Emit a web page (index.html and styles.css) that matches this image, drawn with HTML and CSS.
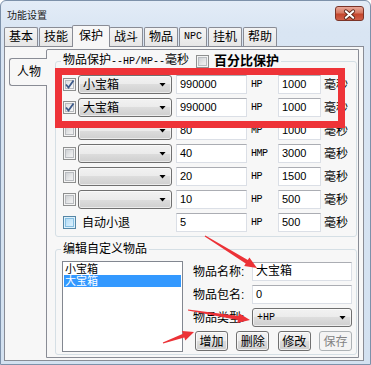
FILE: index.html
```html
<!DOCTYPE html>
<html>
<head>
<meta charset="utf-8">
<link rel="stylesheet" href="styles.css">
</head>
<body>
<div class="screen">
  <div class="window">
    <div class="titlebar">
      <span class="title">功能设置</span>
      <span class="close">
        <svg width="29" height="15" viewBox="0 0 29 15">
          <path d="M10.5 4 L18.5 11 M18.5 4 L10.5 11" stroke="#5b2418" stroke-width="4" stroke-linecap="round"/>
          <path d="M10.5 4 L18.5 11 M18.5 4 L10.5 11" stroke="#ffffff" stroke-width="2.2" stroke-linecap="round"/>
        </svg>
      </span>
    </div>
    <div class="client">
      <div class="tabs">
        <div class="tab">基本</div>
        <div class="tab">技能</div>
        <div class="tab active">保护</div>
        <div class="tab">战斗</div>
        <div class="tab">物品</div>
        <div class="tab"><span class="lat">NPC</span></div>
        <div class="tab">挂机</div>
        <div class="tab">帮助</div>
      </div>
      <div class="page">
        <div class="vtab">人物</div>
        <div class="inner">
          <div class="group g1">
            <div class="gtitle">
              <span>物品保护<span class="lat">--HP/MP--</span>毫秒</span>
              <span class="cb"></span>
              <b class="bold">百分比保护</b>
            </div>
            <div class="rows">
              <span class="cb checked"><svg width="11" height="11" viewBox="0 0 11 11"><path d="M2 5.5 L4.5 8.5 L9.5 1.5" fill="none" stroke="#3d5a8a" stroke-width="1.8"/></svg></span>
              <div class="combo"><span>小宝箱</span><i class="arrow"></i></div>
              <div class="edit">990000</div>
              <span class="unit">HP</span>
              <div class="edit">1000</div>
              <span class="ms">毫秒</span>

              <span class="cb checked"><svg width="11" height="11" viewBox="0 0 11 11"><path d="M2 5.5 L4.5 8.5 L9.5 1.5" fill="none" stroke="#3d5a8a" stroke-width="1.8"/></svg></span>
              <div class="combo"><span>大宝箱</span><i class="arrow"></i></div>
              <div class="edit">990000</div>
              <span class="unit">HP</span>
              <div class="edit">1000</div>
              <span class="ms">毫秒</span>

              <span class="cb"></span>
              <div class="combo"><span></span><i class="arrow"></i></div>
              <div class="edit">80</div>
              <span class="unit">MP</span>
              <div class="edit">1000</div>
              <span class="ms">毫秒</span>

              <span class="cb"></span>
              <div class="combo"><span></span><i class="arrow"></i></div>
              <div class="edit">40</div>
              <span class="unit">HMP</span>
              <div class="edit">3000</div>
              <span class="ms">毫秒</span>

              <span class="cb"></span>
              <div class="combo"><span></span><i class="arrow"></i></div>
              <div class="edit">20</div>
              <span class="unit">HP</span>
              <div class="edit">1500</div>
              <span class="ms">毫秒</span>

              <span class="cb"></span>
              <div class="combo"><span></span><i class="arrow"></i></div>
              <div class="edit">10</div>
              <span class="unit">HP</span>
              <div class="edit">500</div>
              <span class="ms">毫秒</span>

              <span class="cb hot"></span>
              <span class="cblabel">自动小退</span>
              <div class="edit">5</div>
              <span class="unit">HP</span>
              <div class="edit">500</div>
              <span class="ms">毫秒</span>
            </div>
          </div>
          <div class="group g2">
            <div class="gtitle"><span>编辑自定义物品</span></div>
            <div class="g2body">
              <div class="listbox">
                <div class="item">小宝箱</div>
                <div class="item sel">大宝箱</div>
              </div>
              <div class="form">
                <div class="field"><span class="flabel">物品名称:</span><div class="edit wide cjk">大宝箱</div></div>
                <div class="field"><span class="flabel">物品包名:</span><div class="edit wide">0</div></div>
                <div class="field"><span class="flabel">物品类型:</span><div class="combo wide"><span class="lat">+HP</span><i class="arrow"></i></div></div>
                <div class="buttons">
                  <button class="btn">增加</button>
                  <button class="btn">删除</button>
                  <button class="btn">修改</button>
                  <button class="btn" disabled>保存</button>
                </div>
              </div>
            </div>
          </div>
        </div>
      </div>
    </div>
  </div>
  <div class="redbox"></div>
  <svg class="arrows" width="371" height="365" viewBox="0 0 371 365">
    <polygon points="204.7,236.4 245.7,263.4 244.2,266.0 257,268 249.4,257.4 247.8,260.0 205.3,235.6"/>
    <polygon points="187.9,310.5 237.8,320.1 237.4,323.0 250,320 239.0,313.2 238.5,316.1 188.1,309.5"/>
    <polygon points="163.2,343.5 184.3,337.6 185.3,340.4 194,332 182.0,331.0 183.0,333.8 162.8,342.5"/>
  </svg>
</div>
</body>
</html>
```
FILE: styles.css
```css
* { box-sizing: border-box; }
html, body { margin: 0; padding: 0; }
body {
  width: 371px;
  height: 365px;
  overflow: hidden;
  background: #ffffff;
  font-family: "Liberation Sans", "Noto Sans CJK SC", sans-serif;
  font-size: 12px;
  line-height: 14px;
  color: #000;
}
.screen { position: relative; width: 371px; height: 365px; }
.window {
  width: 371px;
  height: 365px;
  border: 1px solid #7d91aa;
  border-radius: 6px 6px 0 0;
  background: linear-gradient(#e3ecf7, #d9e5f3 30px, #d3e1f0);
  padding: 0 6px 3px 3px;
  display: flex;
  flex-direction: column;
}
.titlebar {
  height: 24px;
  display: flex;
  justify-content: space-between;
  align-items: flex-start;
}
.title {
  margin: 7px 0 0 3px;
  font-family: "Noto Sans CJK SC", sans-serif;
  font-size: 10px;
  line-height: 14px;
  color: #1a1a1a;
}
.close {
  margin-top: 5px;
  width: 29px;
  height: 15px;
  border: 1px solid #7b3428;
  border-radius: 3px;
  background: linear-gradient(#e9a899, #d77a64 45%, #c4452c 55%, #d0604a);
  display: flex;
}
.client { flex: 1; display: flex; flex-direction: column; }
.tabs {
  height: 21px;
  display: flex;
  align-items: flex-end;
}
.tab {
  height: 19px;
  padding: 0 4px;
  margin-right: 1px;
  border: 1px solid #898c95;
  border-bottom: none;
  border-radius: 2px 2px 0 0;
  background: linear-gradient(#f4f4f4, #e6e6e6);
  display: flex;
  align-items: center;
  line-height: 14px;
}
.tab.active {
  position: relative;
  z-index: 2;
  height: 22px;
  margin: 0 -1px -1px -2px;
  padding: 0 6px 2px;
  background: #f7f7f7;
}
.lat {
  font-family: "Liberation Mono", monospace;
  font-size: 10px;
}
.page {
  flex: 1;
  border: 1px solid #898c95;
  background: #f7f7f7;
  padding: 2px 4px 2px 4px;
  display: flex;
  align-items: flex-start;
}
.vtab {
  position: relative;
  z-index: 1;
  width: 38px;
  height: 28px;
  margin: 9px -1px 0 0;
  padding-left: 7px;
  border: 1px solid #898c95;
  border-right: none;
  border-radius: 3px 0 0 3px;
  background: #f7f7f7;
  display: flex;
  align-items: center;
}
.inner {
  flex: 1;
  align-self: stretch;
  border: 1px solid #898c95;
  border-radius: 2px 0 0 0;
  background: #f7f7f7;
  padding: 0 1px 0 8px;
}
.group {
  border: 1px solid #d5dfe5;
  border-radius: 3px;
}
.g1 { margin-top: 11px; padding: 0 6px 4px 7px; }
.g2 { margin-top: 12px; padding: 0 3px 2px 6px; }
.gtitle {
  width: fit-content;
  height: 14px;
  margin: -8px 0 0 -2px;
  padding: 0 2px;
  background: #f7f7f7;
  display: flex;
  align-items: center;
}
.g2 .gtitle { margin-left: -1px; }
.gtitle .cb { margin-left: 7px; }
.bold {
  margin-left: 5px;
  font-size: 13px;
  font-weight: bold;
}
.rows {
  margin-top: 7px;
  display: grid;
  grid-template-columns: 15px 98px 75px 27px 46px auto;
  grid-auto-rows: 19px;
  row-gap: 4px;
  align-items: center;
}
.cb {
  display: block;
  position: relative;
  width: 13px;
  height: 13px;
  border: 1px solid #8e8f8f;
  background: linear-gradient(135deg, #c4c7cb, #e8e9ea 60%, #f7f7f7);
  box-shadow: inset 0 0 0 1px #f4f4f4, inset 0 0 0 2px #b9bcc0;
}
.cb svg { position: absolute; left: 0; top: 0; }
.cb.checked { background: linear-gradient(135deg, #d6d8db, #f1f1f1 60%, #fafafa); }
.cb.hot {
  border-color: #5586a6;
  background: linear-gradient(135deg, #a9d6f3, #cfeafb 60%, #e4f4fd);
  box-shadow: inset 0 0 0 1px #def1fc, inset 0 0 0 2px #86bfe2;
}
.cblabel { padding-left: 4px; }
.combo {
  width: 94px;
  height: 19px;
  padding: 0 5px 0 4px;
  border: 1px solid #707070;
  border-radius: 3px;
  background: linear-gradient(#f2f2f2, #ebebeb 50%, #dddddd 50%, #cfcfcf);
  box-shadow: inset 0 0 0 1px rgba(255,255,255,0.6);
  display: flex;
  align-items: center;
  justify-content: space-between;
}
.combo.wide { width: 100px; height: 19px; }
.arrow {
  display: block;
  width: 7px;
  height: 4px;
  background: #000;
  clip-path: polygon(0 0, 100% 0, 50% 100%);
}
.edit {
  height: 19px;
  width: 71px;
  padding-left: 3px;
  border: 1px solid #dbdfe6;
  border-top-color: #abadb3;
  background: #fff;
  font-size: 11px;
  line-height: 17px;
}
.rows .edit:nth-child(6n+5) { width: 43px; }
.edit.wide { width: 100px; }
.edit.cjk { font-size: 12px; }
.unit {
  font-family: "Liberation Mono", monospace;
  font-size: 10px;
  letter-spacing: -0.5px;
}
.g2body {
  margin-top: 5px;
  display: flex;
  align-items: flex-start;
}
.listbox {
  width: 121px;
  height: 91px;
  border: 1px solid #828790;
  background: #fff;
  padding: 1px;
}
.item {
  height: 12px;
  font-size: 11px;
  line-height: 12px;
  padding-left: 1px;
  overflow: hidden;
}
.item.sel { background: #3399ff; color: #fff; }
.form {
  margin: 1px 0 0 10px;
  width: 159px;
  display: flex;
  flex-direction: column;
  gap: 4px;
}
.field {
  height: 19px;
  display: flex;
  align-items: center;
}
.flabel { width: 59px; }
.buttons {
  padding-left: 2px;
  display: flex;
  justify-content: space-between;
}
.btn {
  width: 33px;
  height: 20px;
  padding: 0;
  border: 1px solid #707070;
  border-radius: 3px;
  background: linear-gradient(#f2f2f2, #ebebeb 50%, #dddddd 50%, #cfcfcf);
  box-shadow: inset 0 0 0 1px rgba(255,255,255,0.7);
  font-family: "Noto Sans CJK SC", sans-serif;
  font-size: 12px;
  line-height: 16px;
  color: #000;
}
.btn:disabled {
  border-color: #adb2b5;
  background: #f4f4f4;
  box-shadow: none;
  color: #838383;
}
.redbox {
  position: absolute;
  left: 55px;
  top: 68px;
  width: 290px;
  height: 60px;
  border: 7px solid #ee3338;
}
.arrows {
  position: absolute;
  left: 0;
  top: 0;
  pointer-events: none;
  fill: #ec3237;
}
```
